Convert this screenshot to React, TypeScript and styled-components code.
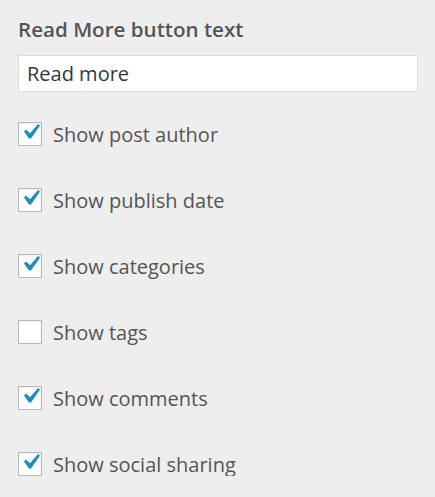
import styled, { createGlobalStyle } from 'styled-components'

const GlobalStyle = createGlobalStyle`
  body {
    margin: 0;
    background: #eeeeee;
    font-family: 'Open Sans', 'Noto Sans', sans-serif;
    color: #555d66;
  }
`

const Panel = styled.div`
  padding: 15px 17px 0 18px;
  display: flex;
  flex-direction: column;
`

const Title = styled.div`
  font-size: 20.6px;
  font-weight: 600;
  line-height: 28px;
  color: #555;
  margin-bottom: 12px;
`

const TextInput = styled.input`
  box-sizing: border-box;
  width: 400px;
  height: 37px;
  margin: 0;
  padding: 0 8px;
  border: 1px solid #dddddd;
  background: #fff;
  font-family: inherit;
  font-size: 20px;
  color: #32373c;
  outline: none;
`

const OptionList = styled.div`
  margin-top: 30px;
  display: flex;
  flex-direction: column;
  gap: 42px;
`

const Row = styled.label`
  display: flex;
  align-items: center;
  gap: 11px;
  height: 24px;
  font-size: 20px;
  color: #555;
`

const Box = styled.span`
  box-sizing: border-box;
  width: 24px;
  height: 24px;
  border: 1px solid #b4b9be;
  background: #fff;
  box-shadow: inset 0 1px 2px rgba(0, 0, 0, 0.07);
  display: flex;
  align-items: center;
  justify-content: center;
  flex-shrink: 0;
`

const CheckMark = styled.svg`
  flex-shrink: 0;
  transform: translateY(-2.5px);
`

const options: [string, boolean][] = [
  ['Show post author', true],
  ['Show publish date', true],
  ['Show categories', true],
  ['Show tags', false],
  ['Show comments', true],
  ['Show social sharing', true],
]

const Check = () => (
  <CheckMark width='31' height='31' viewBox='0 0 20 20'>
    <path d='M14.83 4.89l1.34.94-5.81 8.38H9.02L5.78 9.67l1.34-1.25 2.57 2.4z' fill='#1e8cbe' />
  </CheckMark>
)

const App = () => (
  <>
    <GlobalStyle />
    <Panel>
      <Title>Read More button text</Title>
      <TextInput defaultValue='Read more' />
      <OptionList>
        {options.map(([label, checked]) => (
          <Row key={label}>
            <Box>{checked && <Check />}</Box>
            {label}
          </Row>
        ))}
      </OptionList>
    </Panel>
  </>
)

export default App
